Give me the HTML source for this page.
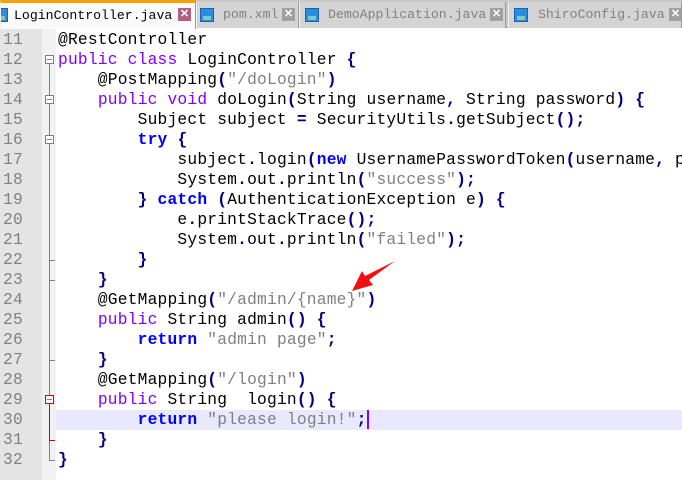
<!DOCTYPE html>
<html><head><style>
*{margin:0;padding:0;box-sizing:border-box}
body{width:682px;height:480px;overflow:hidden;background:#fff;position:relative;font-family:"Liberation Mono",monospace}
.tabs{position:absolute;left:0;top:0;width:682px;height:28px;background:#c8c8c8;border-bottom:1px solid #a0a0a0}
.tab{position:absolute;top:2px;height:26px;background:#d4d4d4;border-right:1px solid #9a9a9a;border-left:1px solid #f0f0f0;font-size:13.2px;color:#808080;line-height:26px;white-space:nowrap;overflow:hidden}
.tab.act{top:0;height:29px;background:#fafafa;color:#000;border-top:3px solid #f7a000;line-height:25px}
.ic{position:absolute;top:6px;width:14px;height:14px;background:#2a8de0;border:1px solid #1a60b0}
.ic:after{content:"";position:absolute;left:2px;right:2px;bottom:1px;height:4px;background:#7fc8c0}
.x{position:absolute;top:6px;width:13px;height:13px;background:#a0a0a0;color:#fff;font:bold 11px/13px "Liberation Sans",sans-serif;text-align:center}
.act .x{background:#b06080}
.gut{position:absolute;left:0;top:29px;width:42px;height:451px;background:#e4e4e4}
.fold{position:absolute;left:42px;top:29px;width:14px;height:451px;background:#f2f2f2}
.ln{position:absolute;left:3px;font-size:16.25px;color:#808080;line-height:20px;letter-spacing:0.3px}
.code{position:absolute;left:58px;font-size:16.25px;line-height:20px;white-space:pre;color:#000;letter-spacing:0.2px}
.p{color:#8000ff}.k{color:#0000ff;font-weight:bold}.s{color:#808080}.o{color:#000080;font-weight:bold}
.hl{position:absolute;left:56px;top:410px;width:626px;height:20px;background:#e8e8ff}
.box{position:absolute;left:45px;width:9px;height:9px;border:1px solid #808080;background:#fff}
.box:after{content:"";position:absolute;left:1px;top:3px;width:5px;height:1px;background:#808080}
.vl{position:absolute;left:49px;width:1px;background:#808080}
</style></head><body>
<div class="tabs">
 <div class="tab act" style="left:0;width:196px"><div class="ic" style="left:-7px;top:5px"></div><span style="position:absolute;left:13px">LoginController.java</span><div class="x" style="left:177px;top:5px">✕</div></div>
 <div class="tab" style="left:196px;width:103px"><div class="ic" style="left:3px"></div><span style="position:absolute;left:26px">pom.xml</span><div class="x" style="left:85px">✕</div></div>
 <div class="tab" style="left:299px;width:207px"><div class="ic" style="left:5px"></div><span style="position:absolute;left:28px">DemoApplication.java</span><div class="x" style="left:190px">✕</div></div>
 <div class="tab" style="left:508px;width:174px"><div class="ic" style="left:5px"></div><span style="position:absolute;left:29px">ShiroConfig.java</span><div class="x" style="left:160px">✕</div></div>
</div>
<div class="gut"></div><div class="fold"></div>
<div class="hl"></div>
<div class="vl" style="top:64px;height:396px"></div>
<div class="vl" style="top:460px;height:1px;width:6px"></div>
<div class="box" style="top:55px"></div>
<div class="box" style="top:95px"></div>
<div class="box" style="top:135px"></div>
<div class="vl" style="top:280px;height:1px;width:6px"></div>
<div class="vl" style="top:360px;height:1px;width:6px"></div>
<div class="vl" style="top:260px;height:1px;width:6px"></div>
<div class="vl" style="top:404px;height:36px;background:#e00000"></div>
<div class="vl" style="top:440px;height:1px;width:6px;background:#e00000"></div>
<div class="box" style="top:395px;border-color:#e00000"></div>
<div class="ln" style="top:30px">11<br>12<br>13<br>14<br>15<br>16<br>17<br>18<br>19<br>20<br>21<br>22<br>23<br>24<br>25<br>26<br>27<br>28<br>29<br>30<br>31<br>32</div>
<div class="code" style="top:30px">@RestController
<span class="p">public</span> <span class="p">class</span> LoginController <span class="o">{</span>
    @PostMapping<span class="o">(</span><span class="s">"/doLogin"</span><span class="o">)</span>
    <span class="p">public</span> <span class="p">void</span> doLogin<span class="o">(</span>String username<span class="o">,</span> String password<span class="o">)</span> <span class="o">{</span>
        Subject subject <span class="o">=</span> SecurityUtils<span class="o">.</span>getSubject<span class="o">();</span>
        <span class="k">try</span> <span class="o">{</span>
            subject<span class="o">.</span>login<span class="o">(</span><span class="k">new</span> UsernamePasswordToken<span class="o">(</span>username<span class="o">,</span> p
            System<span class="o">.</span>out<span class="o">.</span>println<span class="o">(</span><span class="s">"success"</span><span class="o">);</span>
        <span class="o">}</span> <span class="k">catch</span> <span class="o">(</span>AuthenticationException e<span class="o">)</span> <span class="o">{</span>
            e<span class="o">.</span>printStackTrace<span class="o">();</span>
            System<span class="o">.</span>out<span class="o">.</span>println<span class="o">(</span><span class="s">"failed"</span><span class="o">);</span>
        <span class="o">}</span>
    <span class="o">}</span>
    @GetMapping<span class="o">(</span><span class="s">"/admin/{name}"</span><span class="o">)</span>
    <span class="p">public</span> String admin<span class="o">()</span> <span class="o">{</span>
        <span class="k">return</span> <span class="s">"admin page"</span><span class="o">;</span>
    <span class="o">}</span>
    @GetMapping<span class="o">(</span><span class="s">"/login"</span><span class="o">)</span>
    <span class="p">public</span> String  login<span class="o">()</span> <span class="o">{</span>
        <span class="k">return</span> <span class="s">"please login!"</span><span class="o">;</span><span style="border-left:2px solid #8000ff"></span>
    <span class="o">}</span>
<span class="o">}</span></div>
<svg style="position:absolute;left:0;top:0" width="682" height="480"><polygon points="395,261 369,280 373,285 352,291 362,271 365,276" fill="#f01010"/></svg>
</body></html>
